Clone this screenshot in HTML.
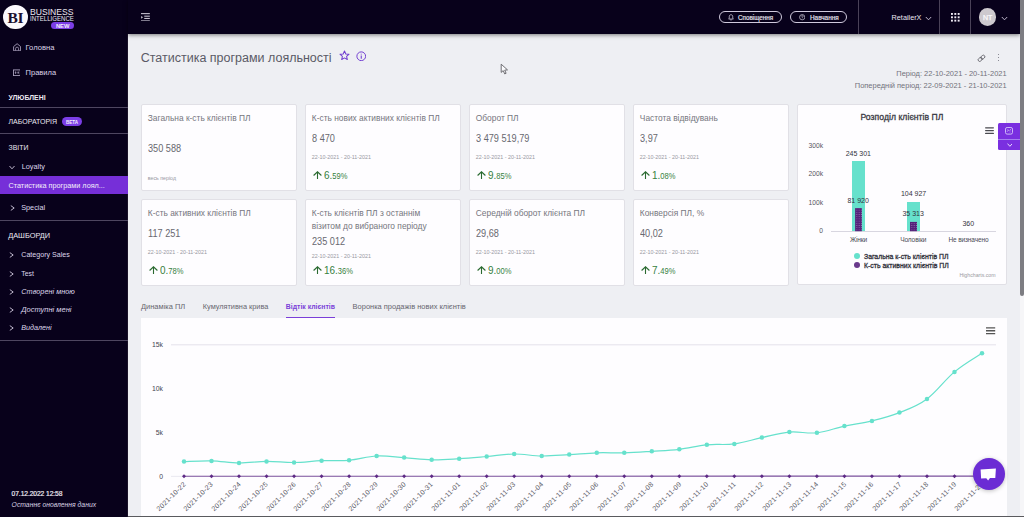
<!DOCTYPE html>
<html><head><meta charset="utf-8"><title>BI</title>
<style>
html,body{margin:0;padding:0;width:1024px;height:517px;overflow:hidden;background:#eeeff3;}
body{position:relative;font-family:"Liberation Sans",sans-serif;}
.t{position:absolute;white-space:nowrap;line-height:1;}
</style></head><body>
<div style="position:absolute;left:0px;top:0px;width:1024px;height:517px;background:#eeeff3"></div>
<div style="position:absolute;left:0px;top:0px;width:128px;height:517px;background:#08011b"></div>
<div style="position:absolute;left:127px;top:34px;width:1px;height:483px;background:#1a1228"></div>
<div style="position:absolute;left:1019.5px;top:0px;width:4.5px;height:517px;background:#f6f6f8"></div>
<div style="position:absolute;left:128px;top:0px;width:892px;height:34px;background:#08011b;box-shadow:0 1px 4px rgba(0,0,0,.5)"></div>
<div style="position:absolute;left:3px;top:4.8px;width:24.5px;height:24.5px;border-radius:50%;background:#fbf9fd"></div>
<div class="t" style="left:15.30px;transform:translateX(-50%);top:9.70px;font-size:15.5px;color:#1a0f30;font-weight:700;font-style:normal;font-family:'Liberation Serif',serif;letter-spacing:-0.5px">BI</div>
<div class="t" style="left:30.00px;top:6.90px;font-size:9.4px;color:#ece8f2;font-weight:400;font-style:normal;transform:scaleX(0.915);transform-origin:0 0">BUSINESS</div>
<div class="t" style="left:30.20px;top:15.40px;font-size:7.2px;color:#ece8f2;font-weight:400;font-style:normal;transform:scaleX(0.845);transform-origin:0 0">INTELLIGENCE</div>
<div style="position:absolute;left:51.2px;top:22.3px;width:23px;height:6.6px;border-radius:4px;background:#7b3ee6"></div>
<div class="t" style="left:62.70px;transform:translateX(-50%);top:23.70px;font-size:5.8px;color:#f4f0fb;font-weight:700;font-style:normal;">NEW</div>
<svg style="position:absolute;left:12.5px;top:42.7px" width="8.2" height="8.4" viewBox="0 0 8.2 8.4"><path d="M0.6 3.6 L4.1 0.7 L7.6 3.6 V7.8 H0.6 Z" fill="none" stroke="#a9a0bc" stroke-width="0.9" stroke-linejoin="round"/><path d="M2.6 7.6 V5.6 A1.5 1.5 0 0 1 5.6 5.6 V7.6" fill="none" stroke="#a9a0bc" stroke-width="0.8"/></svg>
<div class="t" style="left:25.50px;top:44.10px;font-size:7.6px;color:#ddd6ea;font-weight:400;font-style:normal;">Головна</div>
<svg style="position:absolute;left:12.5px;top:69px" width="7.8" height="7" viewBox="0 0 7.8 7"><rect x="0.5" y="0.9" width="6.8" height="5.7" fill="none" stroke="#a9a0bc" stroke-width="0.9"/><path d="M2.6 2.3 V5 M5.2 2.3 V5 M1.8 3.6 H3.4 M4.4 3.6 H6" stroke="#a9a0bc" stroke-width="0.7"/></svg>
<div class="t" style="left:25.60px;top:69.20px;font-size:7.5px;color:#ddd6ea;font-weight:400;font-style:normal;">Правила</div>
<div class="t" style="left:8.50px;top:95.40px;font-size:6.9px;color:#ece8f2;font-weight:700;font-style:normal;">УЛЮБЛЕНІ</div>
<div style="position:absolute;left:0px;top:106.8px;width:128px;height:1.7px;background:#4e4660"></div>
<div class="t" style="left:8.50px;top:118.30px;font-size:7.0px;color:#ece8f2;font-weight:400;font-style:normal;">ЛАБОРАТОРІЯ</div>
<div style="position:absolute;left:62px;top:117px;width:20px;height:9px;border-radius:5px;background:#7b3ee6"></div>
<div class="t" style="left:72.00px;transform:translateX(-50%);top:120.60px;font-size:4.6px;color:#f4f0fb;font-weight:700;font-style:normal;">BETA</div>
<div style="position:absolute;left:0px;top:132.6px;width:128px;height:1.7px;background:#4e4660"></div>
<div class="t" style="left:8.50px;top:144.60px;font-size:6.9px;color:#ece8f2;font-weight:400;font-style:normal;">ЗВІТИ</div>
<svg style="position:absolute;left:9px;top:165px" width="6" height="5" viewBox="0 0 6 5"><path d="M0.5 1 L3 3.8 L5.5 1" fill="none" stroke="#cfc8dc" stroke-width="0.9"/></svg>
<div class="t" style="left:21.70px;top:163.00px;font-size:7.3px;color:#ddd6ea;font-weight:400;font-style:normal;">Loyalty</div>
<div style="position:absolute;left:0px;top:176px;width:128px;height:18px;background:#762fd8"></div>
<div class="t" style="left:8.50px;top:182.30px;font-size:7.26px;color:#f2eefa;font-weight:400;font-style:normal;">Статистика програми лоял...</div>
<svg style="position:absolute;left:9.5px;top:204.5px" width="5" height="6" viewBox="0 0 5 6"><path d="M0.8 0.6 L4.2 3 L0.8 5.4" fill="none" stroke="#cfc8dc" stroke-width="0.9"/></svg>
<div class="t" style="left:21.20px;top:203.50px;font-size:7.3px;color:#ddd6ea;font-weight:400;font-style:normal;">Special</div>
<div style="position:absolute;left:0px;top:219.6px;width:128px;height:1.7px;background:#4e4660"></div>
<div class="t" style="left:8.20px;top:231.60px;font-size:7.4px;color:#ece8f2;font-weight:400;font-style:normal;">ДАШБОРДИ</div>
<svg style="position:absolute;left:9.3px;top:251.7px" width="5" height="6" viewBox="0 0 5 6"><path d="M0.8 0.6 L4.2 3 L0.8 5.4" fill="none" stroke="#cfc8dc" stroke-width="0.9"/></svg>
<div class="t" style="left:21.30px;top:252.20px;font-size:7.1px;color:#ddd6ea;font-weight:400;font-style:normal;">Category Sales</div>
<svg style="position:absolute;left:9.3px;top:270.5px" width="5" height="6" viewBox="0 0 5 6"><path d="M0.8 0.6 L4.2 3 L0.8 5.4" fill="none" stroke="#cfc8dc" stroke-width="0.9"/></svg>
<div class="t" style="left:21.30px;top:271.00px;font-size:6.9px;color:#ddd6ea;font-weight:400;font-style:normal;">Test</div>
<svg style="position:absolute;left:9.3px;top:288.5px" width="5" height="6" viewBox="0 0 5 6"><path d="M0.8 0.6 L4.2 3 L0.8 5.4" fill="none" stroke="#cfc8dc" stroke-width="0.9"/></svg>
<div class="t" style="left:21.30px;top:288.00px;font-size:7.3px;color:#ddd6ea;font-weight:400;font-style:italic;">Створені мною</div>
<svg style="position:absolute;left:9.3px;top:306.5px" width="5" height="6" viewBox="0 0 5 6"><path d="M0.8 0.6 L4.2 3 L0.8 5.4" fill="none" stroke="#cfc8dc" stroke-width="0.9"/></svg>
<div class="t" style="left:21.30px;top:306.00px;font-size:7.5px;color:#ddd6ea;font-weight:400;font-style:italic;">Доступні мені</div>
<svg style="position:absolute;left:9.3px;top:324.8px" width="5" height="6" viewBox="0 0 5 6"><path d="M0.8 0.6 L4.2 3 L0.8 5.4" fill="none" stroke="#cfc8dc" stroke-width="0.9"/></svg>
<div class="t" style="left:21.30px;top:324.30px;font-size:7.2px;color:#ddd6ea;font-weight:400;font-style:italic;">Видалені</div>
<div style="position:absolute;left:0px;top:339.6px;width:128px;height:1.7px;background:#4e4660"></div>
<div class="t" style="left:11.60px;top:491.00px;font-size:6.7px;color:#ece8f2;font-weight:400;font-style:normal;-webkit-text-stroke:0.2px #ece8f2;letter-spacing:-0.08px">07.12.2022 12:58</div>
<div class="t" style="left:11.60px;top:502.00px;font-size:6.8px;color:#d8d2e4;font-weight:400;font-style:italic;">Останнє оновлення даних</div>
<svg style="position:absolute;left:141px;top:12.7px" width="9.3" height="8.6" viewBox="0 0 10 9"><path d="M0 0.6 H9.5 M3.5 3.3 H9.5 M3.5 5.7 H9.5 M0 8.4 H9.5" stroke="#e8e4f0" stroke-width="1"/><path d="M0.3 3 L2 4.5 L0.3 6 Z" fill="#e8e4f0"/></svg>
<div style="position:absolute;left:719px;top:11.2px;width:60.8px;height:9.8px;border:1px solid #cfc9dc;border-radius:7px"></div>
<svg style="position:absolute;left:727.6px;top:14.3px" width="6" height="6.6" viewBox="0 0 8 9"><path d="M4 1 C2.4 1 1.6 2.2 1.6 3.7 V5.7 L0.8 6.9 H7.2 L6.4 5.7 V3.7 C6.4 2.2 5.6 1 4 1 Z" fill="none" stroke="#e8e4f0" stroke-width="0.95" stroke-linejoin="round"/><path d="M3 8.1 H5" stroke="#e8e4f0" stroke-width="0.9"/></svg>
<div class="t" style="left:738.00px;top:15.00px;font-size:6.3px;color:#ece8f2;font-weight:400;font-style:normal;-webkit-text-stroke:0.15px #ece8f2">Сповіщення</div>
<div style="position:absolute;left:790px;top:11.2px;width:54.8px;height:9.8px;border:1px solid #cfc9dc;border-radius:7px"></div>
<svg style="position:absolute;left:798.8px;top:14.3px" width="6.4" height="6.4" viewBox="0 0 8 8"><circle cx="4" cy="4" r="3.3" fill="none" stroke="#e8e4f0" stroke-width="0.8"/><path d="M2.9 3.1 A1.1 1.1 0 1 1 4 4.2 V4.9 M4 5.8 V6.2" fill="none" stroke="#e8e4f0" stroke-width="0.7"/></svg>
<div class="t" style="left:810.00px;top:15.00px;font-size:6.4px;color:#ece8f2;font-weight:400;font-style:normal;-webkit-text-stroke:0.15px #ece8f2">Навчання</div>
<div style="position:absolute;left:857.8px;top:0px;width:1px;height:34px;background:#4a4258"></div>
<div style="position:absolute;left:939.1px;top:0px;width:1px;height:34px;background:#4a4258"></div>
<div style="position:absolute;left:969.9px;top:0px;width:1px;height:34px;background:#4a4258"></div>
<div class="t" style="left:891.60px;top:13.60px;font-size:7.25px;color:#ece8f2;font-weight:400;font-style:normal;">RetailerX</div>
<svg style="position:absolute;left:925px;top:15.5px" width="7" height="5" viewBox="0 0 7 5"><path d="M0.8 1 L3.5 3.8 L6.2 1" fill="none" stroke="#cfc8dc" stroke-width="0.9"/></svg>
<svg style="position:absolute;left:951px;top:12.5px" width="10" height="10" viewBox="0 0 10 10"><rect x="0.00" y="0.00" width="1.9" height="1.9" fill="#f0ecf6"/><rect x="3.35" y="0.00" width="1.9" height="1.9" fill="#f0ecf6"/><rect x="6.70" y="0.00" width="1.9" height="1.9" fill="#f0ecf6"/><rect x="0.00" y="3.35" width="1.9" height="1.9" fill="#f0ecf6"/><rect x="3.35" y="3.35" width="1.9" height="1.9" fill="#f0ecf6"/><rect x="6.70" y="3.35" width="1.9" height="1.9" fill="#f0ecf6"/><rect x="0.00" y="6.70" width="1.9" height="1.9" fill="#f0ecf6"/><rect x="3.35" y="6.70" width="1.9" height="1.9" fill="#f0ecf6"/><rect x="6.70" y="6.70" width="1.9" height="1.9" fill="#f0ecf6"/></svg>
<div style="position:absolute;left:979px;top:8.2px;width:17.4px;height:17.4px;border-radius:50%;background:#cdc9ce"></div>
<div class="t" style="left:987.70px;transform:translateX(-50%);top:13.70px;font-size:7px;color:#fbfafc;font-weight:400;font-style:normal;-webkit-text-stroke:0.25px #fbfafc">NT</div>
<svg style="position:absolute;left:1000.5px;top:15.5px" width="7" height="5" viewBox="0 0 7 5"><path d="M0.8 1 L3.5 3.8 L6.2 1" fill="none" stroke="#cfc8dc" stroke-width="0.9"/></svg>
<div style="position:absolute;left:1020px;top:0px;width:4px;height:296px;background:#7d7d82;border-radius:0 0 2px 2px"></div>
<div class="t" style="left:140.70px;top:52.10px;font-size:12.5px;color:#5a5a66;font-weight:400;font-style:normal;">Статистика програми лояльності</div>
<svg style="position:absolute;left:339.3px;top:50.4px" width="11" height="10.5" viewBox="0 0 24 23"><path d="M12 2 L14.9 8.6 L22 9.3 L16.6 14 L18.2 21 L12 17.3 L5.8 21 L7.4 14 L2 9.3 L9.1 8.6 Z" fill="none" stroke="#6f3ad0" stroke-width="2.2" stroke-linejoin="round"/></svg>
<svg style="position:absolute;left:355.6px;top:50.5px" width="10.5" height="10.5" viewBox="0 0 24 24"><circle cx="12" cy="12" r="10" fill="none" stroke="#6f3ad0" stroke-width="2.2"/><path d="M12 10.5 V17.5 M12 6.5 V8.2" stroke="#6f3ad0" stroke-width="2.4"/></svg>
<svg style="position:absolute;left:976.5px;top:53.5px" width="9" height="8.6" viewBox="0 0 10 10"><g transform="rotate(-40 5 5)" fill="none" stroke="#606068" stroke-width="1.0"><rect x="0.4" y="3.2" width="5.2" height="3.6" rx="1.8"/><rect x="4.4" y="3.2" width="5.2" height="3.6" rx="1.8"/></g></svg>
<div style="position:absolute;left:997.9px;top:53.9px;width:1.2px;height:1.2px;border-radius:50%;background:#6a6a75"></div>
<div style="position:absolute;left:997.9px;top:56.8px;width:1.2px;height:1.2px;border-radius:50%;background:#6a6a75"></div>
<div style="position:absolute;left:997.9px;top:59.7px;width:1.2px;height:1.2px;border-radius:50%;background:#6a6a75"></div>
<div class="t" style="right:17.40px;top:70.40px;font-size:7.48px;color:#72727c;font-weight:400;font-style:normal;">Період: 22-10-2021 - 20-11-2021</div>
<div class="t" style="right:17.40px;top:81.80px;font-size:7.48px;color:#72727c;font-weight:400;font-style:normal;">Попередній період: 22-09-2021 - 21-10-2021</div>
<svg style="position:absolute;left:0;top:0" width="1024" height="517"><path d="M501.2,64.2 L501.2,72.4 L503.2,70.6 L504.7,73.9 L506.1,73.3 L504.7,70.1 L507.5,69.9 Z" fill="#fbfbfd" stroke="#606064" stroke-width="0.9" stroke-linejoin="round"/></svg>
<div style="position:absolute;left:141px;top:104px;width:156px;height:86.5px;background:#fefdff;border:1px solid #e1e0e6;border-radius:2px;box-sizing:border-box"></div>
<div class="t" style="left:147.80px;top:114.10px;font-size:8.4px;color:#76767e;font-weight:400;font-style:normal;">Загальна к-сть клієнтів ПЛ</div>
<div class="t" style="left:147.80px;top:144.00px;font-size:10.0px;color:#68686f;font-weight:400;font-style:normal;transform:scaleX(0.915);transform-origin:0 0">350 588</div>
<div class="t" style="left:147.80px;top:175.80px;font-size:5.25px;color:#98989f;font-weight:400;font-style:normal;">весь період</div>
<div style="position:absolute;left:305px;top:104px;width:156px;height:86.5px;background:#fefdff;border:1px solid #e1e0e6;border-radius:2px;box-sizing:border-box"></div>
<div class="t" style="left:311.80px;top:114.10px;font-size:8.4px;color:#76767e;font-weight:400;font-style:normal;">К-сть нових активних клієнтів ПЛ</div>
<div class="t" style="left:311.80px;top:134.00px;font-size:10.0px;color:#68686f;font-weight:400;font-style:normal;transform:scaleX(0.915);transform-origin:0 0">8 470</div>
<div class="t" style="left:311.80px;top:155.00px;font-size:5.37px;color:#98989f;font-weight:400;font-style:normal;">22-10-2021 - 20-11-2021</div>
<svg style="position:absolute;left:312.7px;top:170.8px" width="9" height="8.5" viewBox="0 0 18 17"><path d="M9 16.5 V1.8 M1.2 9 L9 1.5 L16.8 9" fill="none" stroke="#2a6a30" stroke-width="2.2"/></svg>
<div class="t" style="left:323.90000000000003px;top:170.00px;font-size:11.2px;color:#367f40;transform:scaleX(0.89);transform-origin:0 0">6.<span style="font-size:8.5px">59%</span></div>
<div style="position:absolute;left:469px;top:104px;width:156px;height:86.5px;background:#fefdff;border:1px solid #e1e0e6;border-radius:2px;box-sizing:border-box"></div>
<div class="t" style="left:475.80px;top:114.10px;font-size:8.4px;color:#76767e;font-weight:400;font-style:normal;">Оборот ПЛ</div>
<div class="t" style="left:475.80px;top:134.00px;font-size:10.0px;color:#68686f;font-weight:400;font-style:normal;transform:scaleX(0.915);transform-origin:0 0">3 479 519,79</div>
<div class="t" style="left:475.80px;top:155.00px;font-size:5.37px;color:#98989f;font-weight:400;font-style:normal;">22-10-2021 - 20-11-2021</div>
<svg style="position:absolute;left:476.7px;top:170.8px" width="9" height="8.5" viewBox="0 0 18 17"><path d="M9 16.5 V1.8 M1.2 9 L9 1.5 L16.8 9" fill="none" stroke="#2a6a30" stroke-width="2.2"/></svg>
<div class="t" style="left:487.90000000000003px;top:170.00px;font-size:11.2px;color:#367f40;transform:scaleX(0.89);transform-origin:0 0">9.<span style="font-size:8.5px">85%</span></div>
<div style="position:absolute;left:633px;top:104px;width:156px;height:86.5px;background:#fefdff;border:1px solid #e1e0e6;border-radius:2px;box-sizing:border-box"></div>
<div class="t" style="left:639.80px;top:114.10px;font-size:8.4px;color:#76767e;font-weight:400;font-style:normal;">Частота відвідувань</div>
<div class="t" style="left:639.80px;top:134.00px;font-size:10.0px;color:#68686f;font-weight:400;font-style:normal;transform:scaleX(0.915);transform-origin:0 0">3,97</div>
<div class="t" style="left:639.80px;top:155.00px;font-size:5.37px;color:#98989f;font-weight:400;font-style:normal;">22-10-2021 - 20-11-2021</div>
<svg style="position:absolute;left:640.6999999999999px;top:170.8px" width="9" height="8.5" viewBox="0 0 18 17"><path d="M9 16.5 V1.8 M1.2 9 L9 1.5 L16.8 9" fill="none" stroke="#2a6a30" stroke-width="2.2"/></svg>
<div class="t" style="left:651.9px;top:170.00px;font-size:11.2px;color:#367f40;transform:scaleX(0.89);transform-origin:0 0">1.<span style="font-size:8.5px">08%</span></div>
<div style="position:absolute;left:141px;top:199px;width:156px;height:86.5px;background:#fefdff;border:1px solid #e1e0e6;border-radius:2px;box-sizing:border-box"></div>
<div class="t" style="left:147.80px;top:209.10px;font-size:8.4px;color:#76767e;font-weight:400;font-style:normal;">К-сть активних клієнтів ПЛ</div>
<div class="t" style="left:147.80px;top:228.80px;font-size:10.0px;color:#68686f;font-weight:400;font-style:normal;transform:scaleX(0.915);transform-origin:0 0">117 251</div>
<div class="t" style="left:147.80px;top:249.80px;font-size:5.37px;color:#98989f;font-weight:400;font-style:normal;">22-10-2021 - 20-11-2021</div>
<svg style="position:absolute;left:148.70000000000002px;top:265.8px" width="9" height="8.5" viewBox="0 0 18 17"><path d="M9 16.5 V1.8 M1.2 9 L9 1.5 L16.8 9" fill="none" stroke="#2a6a30" stroke-width="2.2"/></svg>
<div class="t" style="left:159.9px;top:265.00px;font-size:11.2px;color:#367f40;transform:scaleX(0.89);transform-origin:0 0">0.<span style="font-size:8.5px">78%</span></div>
<div style="position:absolute;left:305px;top:199px;width:156px;height:86.5px;background:#fefdff;border:1px solid #e1e0e6;border-radius:2px;box-sizing:border-box"></div>
<div class="t" style="left:311.80px;top:209.10px;font-size:8.4px;color:#76767e;font-weight:400;font-style:normal;">К-сть клієнтів ПЛ з останнім</div>
<div class="t" style="left:311.80px;top:222.00px;font-size:8.4px;color:#76767e;font-weight:400;font-style:normal;">візитом до вибраного періоду</div>
<div class="t" style="left:311.80px;top:236.60px;font-size:10.0px;color:#68686f;font-weight:400;font-style:normal;transform:scaleX(0.915);transform-origin:0 0">235 012</div>
<div class="t" style="left:311.80px;top:253.50px;font-size:5.37px;color:#98989f;font-weight:400;font-style:normal;">22-10-2021 - 20-11-2021</div>
<svg style="position:absolute;left:312.7px;top:265.8px" width="9" height="8.5" viewBox="0 0 18 17"><path d="M9 16.5 V1.8 M1.2 9 L9 1.5 L16.8 9" fill="none" stroke="#2a6a30" stroke-width="2.2"/></svg>
<div class="t" style="left:323.90000000000003px;top:265.00px;font-size:11.2px;color:#367f40;transform:scaleX(0.89);transform-origin:0 0">16.<span style="font-size:8.5px">36%</span></div>
<div style="position:absolute;left:469px;top:199px;width:156px;height:86.5px;background:#fefdff;border:1px solid #e1e0e6;border-radius:2px;box-sizing:border-box"></div>
<div class="t" style="left:475.80px;top:209.10px;font-size:8.4px;color:#76767e;font-weight:400;font-style:normal;">Середній оборот клієнта ПЛ</div>
<div class="t" style="left:475.80px;top:228.80px;font-size:10.0px;color:#68686f;font-weight:400;font-style:normal;transform:scaleX(0.915);transform-origin:0 0">29,68</div>
<div class="t" style="left:475.80px;top:249.80px;font-size:5.37px;color:#98989f;font-weight:400;font-style:normal;">22-10-2021 - 20-11-2021</div>
<svg style="position:absolute;left:476.7px;top:265.8px" width="9" height="8.5" viewBox="0 0 18 17"><path d="M9 16.5 V1.8 M1.2 9 L9 1.5 L16.8 9" fill="none" stroke="#2a6a30" stroke-width="2.2"/></svg>
<div class="t" style="left:487.90000000000003px;top:265.00px;font-size:11.2px;color:#367f40;transform:scaleX(0.89);transform-origin:0 0">9.<span style="font-size:8.5px">00%</span></div>
<div style="position:absolute;left:633px;top:199px;width:156px;height:86.5px;background:#fefdff;border:1px solid #e1e0e6;border-radius:2px;box-sizing:border-box"></div>
<div class="t" style="left:639.80px;top:209.10px;font-size:8.4px;color:#76767e;font-weight:400;font-style:normal;">Конверсія ПЛ, %</div>
<div class="t" style="left:639.80px;top:228.80px;font-size:10.0px;color:#68686f;font-weight:400;font-style:normal;transform:scaleX(0.915);transform-origin:0 0">40,02</div>
<div class="t" style="left:639.80px;top:249.80px;font-size:5.37px;color:#98989f;font-weight:400;font-style:normal;">22-10-2021 - 20-11-2021</div>
<svg style="position:absolute;left:640.6999999999999px;top:265.8px" width="9" height="8.5" viewBox="0 0 18 17"><path d="M9 16.5 V1.8 M1.2 9 L9 1.5 L16.8 9" fill="none" stroke="#2a6a30" stroke-width="2.2"/></svg>
<div class="t" style="left:651.9px;top:265.00px;font-size:11.2px;color:#367f40;transform:scaleX(0.89);transform-origin:0 0">7.<span style="font-size:8.5px">49%</span></div>
<div style="position:absolute;left:797px;top:104px;width:210px;height:180.5px;background:#fefdff;border:1px solid #e1e0e6;border-radius:2px;box-sizing:border-box"></div>
<div class="t" style="left:902.00px;transform:translateX(-50%);top:112.80px;font-size:8.6px;color:#3a3a44;font-weight:400;font-style:normal;-webkit-text-stroke:0.3px #3a3a44;letter-spacing:0.05px">Розподіл клієнтів ПЛ</div>
<svg style="position:absolute;left:985.3px;top:127px" width="9" height="7.2" viewBox="0 0 9 7.2"><path d="M0.6 0.8 H8.4 M0.6 3.6 H8.4 M0.6 6.4 H8.4" stroke="#4a4a50" stroke-width="1.2" stroke-linecap="round"/></svg>
<div class="t" style="right:201.00px;top:142.80px;font-size:6.7px;color:#555560;font-weight:400;font-style:normal;">300k</div>
<div class="t" style="right:201.00px;top:171.30px;font-size:6.7px;color:#555560;font-weight:400;font-style:normal;">200k</div>
<div class="t" style="right:201.00px;top:200.00px;font-size:6.7px;color:#555560;font-weight:400;font-style:normal;">100k</div>
<div class="t" style="right:201.00px;top:228.20px;font-size:6.7px;color:#555560;font-weight:400;font-style:normal;">0</div>
<div style="position:absolute;left:831px;top:231px;width:165px;height:0.8px;background:#d8d6e0"></div>
<div style="position:absolute;left:852px;top:161.3px;width:13.2px;height:69.9px;background:#66e1cc"></div>
<div style="position:absolute;left:906.8px;top:201.9px;width:13.1px;height:29.3px;background:#66e1cc"></div>
<svg style="position:absolute;left:0;top:0" width="1024" height="517"><defs><pattern id="dots" width="2.2" height="2.2" patternUnits="userSpaceOnUse"><rect width="2.2" height="2.2" fill="#54227a"/><circle cx="1.1" cy="1.1" r="0.45" fill="#b9a0cf"/></pattern></defs><rect x="855.1" y="208.1" width="6.8" height="23.1" fill="url(#dots)"/><rect x="910" y="221.9" width="7" height="9.3" fill="url(#dots)"/></svg>
<div class="t" style="left:858.30px;transform:translateX(-50%);top:150.00px;font-size:7.0px;color:#333340;font-weight:400;font-style:normal;">245 301</div>
<div class="t" style="left:913.60px;transform:translateX(-50%);top:190.40px;font-size:7.0px;color:#333340;font-weight:400;font-style:normal;">104 927</div>
<div class="t" style="left:858.20px;transform:translateX(-50%);top:197.00px;font-size:7.0px;color:#333340;font-weight:400;font-style:normal;">81 920</div>
<div class="t" style="left:913.20px;transform:translateX(-50%);top:210.00px;font-size:7.0px;color:#333340;font-weight:400;font-style:normal;">35 313</div>
<div class="t" style="left:968.30px;transform:translateX(-50%);top:219.70px;font-size:7.0px;color:#333340;font-weight:400;font-style:normal;">360</div>
<div class="t" style="left:858.50px;transform:translateX(-50%);top:237.00px;font-size:6.6px;color:#4a4a54;font-weight:400;font-style:normal;letter-spacing:-0.12px">Жінки</div>
<div class="t" style="left:913.20px;transform:translateX(-50%);top:237.00px;font-size:6.6px;color:#4a4a54;font-weight:400;font-style:normal;letter-spacing:-0.12px">Чоловіки</div>
<div class="t" style="left:968.40px;transform:translateX(-50%);top:237.00px;font-size:6.5px;color:#4a4a54;font-weight:400;font-style:normal;letter-spacing:-0.12px">Не визначено</div>
<div style="position:absolute;left:854px;top:253.3px;width:6.2px;height:6.2px;border-radius:50%;background:#66e1cc"></div>
<div class="t" style="left:864.00px;top:254.30px;font-size:6.9px;color:#33333d;font-weight:400;font-style:normal;-webkit-text-stroke:0.3px #33333d">Загальна к-сть клієнтів ПЛ</div>
<div style="position:absolute;left:854px;top:261.8px;width:6.2px;height:6.2px;border-radius:50%;background:#6a3a8c"></div>
<div class="t" style="left:864.00px;top:262.80px;font-size:6.9px;color:#33333d;font-weight:400;font-style:normal;-webkit-text-stroke:0.3px #33333d">К-сть активних клієнтів ПЛ</div>
<div class="t" style="right:28.40px;top:272.80px;font-size:5.21px;color:#9a9aa2;font-weight:400;font-style:normal;">Highcharts.com</div>
<div style="position:absolute;left:998px;top:122.6px;width:22px;height:27.2px;background:#7a2fe0;border-radius:1.5px 0 0 1.5px"></div>
<div style="position:absolute;left:998px;top:138.8px;width:22px;height:1.6px;background:#a57ff0"></div>
<svg style="position:absolute;left:1005px;top:127.3px" width="8" height="7.6" viewBox="0 0 8 7.6"><rect x="0.5" y="0.5" width="7" height="6.6" rx="1.6" fill="none" stroke="#d8c8fb" stroke-width="0.9"/><path d="M2.2 4.6 L3.6 3 M4.6 3.6 L5.9 2.4 M2.6 2.6 H3.2 M4.8 5 H5.4" stroke="#e6dbff" stroke-width="0.8"/></svg>
<svg style="position:absolute;left:1006.6px;top:143.2px" width="5.8" height="4" viewBox="0 0 5.8 4"><path d="M0.5 0.6 L2.9 3.3 L5.3 0.6" fill="none" stroke="#efe8ff" stroke-width="0.9"/></svg>
<div class="t" style="left:141.00px;top:303.10px;font-size:7.48px;color:#66666f;font-weight:400;font-style:normal;">Динаміка ПЛ</div>
<div class="t" style="left:202.80px;top:303.10px;font-size:7.34px;color:#66666f;font-weight:400;font-style:normal;">Кумулятивна крива</div>
<div class="t" style="left:285.80px;top:304.10px;font-size:6.89px;color:#7a3fd8;font-weight:700;font-style:normal;">Відтік клієнтів</div>
<div class="t" style="left:352.60px;top:303.10px;font-size:7.47px;color:#66666f;font-weight:400;font-style:normal;">Воронка продажів нових клієнтів</div>
<div style="position:absolute;left:285.8px;top:316.8px;width:49.2px;height:1.5px;background:#7a3fd8"></div>
<div style="position:absolute;left:141px;top:318px;width:866px;height:199px;background:#fefdff"></div>
<svg style="position:absolute;left:986px;top:327px" width="9.5" height="7.5" viewBox="0 0 9.5 7.5"><path d="M0 0.8 H9.2 M0 3.75 H9.2 M0 6.7 H9.2" stroke="#555" stroke-width="1.3"/></svg>
<svg style="position:absolute;left:0;top:0" width="1024" height="517" viewBox="0 0 1024 517"><line x1="171" y1="344.8" x2="996" y2="344.8" stroke="#e4e2ec" stroke-width="1"/><line x1="171" y1="476.4" x2="996" y2="476.4" stroke="#e4e2ec" stroke-width="0.8"/><path d="M184.00,461.60 C188.95,461.47 201.61,460.65 211.52,460.90 C221.42,461.15 229.13,462.91 239.03,463.00 C248.94,463.09 256.65,461.49 266.55,461.40 C276.46,461.31 284.16,462.63 294.07,462.50 C303.98,462.37 311.68,461.10 321.59,460.70 C331.49,460.30 339.20,461.15 349.10,460.30 C359.01,459.45 366.71,456.49 376.62,456.00 C386.53,455.51 394.23,456.92 404.14,457.60 C414.04,458.28 421.75,459.60 431.66,459.80 C441.56,460.00 449.27,459.29 459.17,458.70 C469.08,458.11 476.78,457.35 486.69,456.50 C496.60,455.65 504.30,454.09 514.21,454.00 C524.11,453.91 531.82,455.89 541.72,456.00 C551.63,456.11 559.34,455.18 569.24,454.60 C579.15,454.02 586.85,453.12 596.76,452.80 C606.66,452.48 614.37,453.07 624.28,452.80 C634.18,452.53 641.89,451.93 651.79,451.30 C661.70,450.67 669.40,450.47 679.31,449.30 C689.22,448.13 696.92,445.77 706.83,444.80 C716.73,443.83 724.44,445.20 734.34,443.90 C744.25,442.60 751.96,439.72 761.86,437.60 C771.77,435.48 779.47,432.96 789.38,432.10 C799.29,431.24 806.99,433.88 816.90,432.80 C826.80,431.72 834.51,428.24 844.41,426.10 C854.32,423.96 862.02,423.33 871.93,420.90 C881.84,418.47 889.54,416.54 899.45,412.60 C909.35,408.66 917.06,406.33 926.97,399.00 C936.87,391.67 944.58,380.14 954.48,371.90 C964.39,363.66 977.05,356.57 982.00,353.20" fill="none" stroke="#66e1cc" stroke-width="1.2"/><circle cx="184.00" cy="461.60" r="2.25" fill="#66e1cc"/><circle cx="211.52" cy="460.90" r="2.25" fill="#66e1cc"/><circle cx="239.03" cy="463.00" r="2.25" fill="#66e1cc"/><circle cx="266.55" cy="461.40" r="2.25" fill="#66e1cc"/><circle cx="294.07" cy="462.50" r="2.25" fill="#66e1cc"/><circle cx="321.59" cy="460.70" r="2.25" fill="#66e1cc"/><circle cx="349.10" cy="460.30" r="2.25" fill="#66e1cc"/><circle cx="376.62" cy="456.00" r="2.25" fill="#66e1cc"/><circle cx="404.14" cy="457.60" r="2.25" fill="#66e1cc"/><circle cx="431.66" cy="459.80" r="2.25" fill="#66e1cc"/><circle cx="459.17" cy="458.70" r="2.25" fill="#66e1cc"/><circle cx="486.69" cy="456.50" r="2.25" fill="#66e1cc"/><circle cx="514.21" cy="454.00" r="2.25" fill="#66e1cc"/><circle cx="541.72" cy="456.00" r="2.25" fill="#66e1cc"/><circle cx="569.24" cy="454.60" r="2.25" fill="#66e1cc"/><circle cx="596.76" cy="452.80" r="2.25" fill="#66e1cc"/><circle cx="624.28" cy="452.80" r="2.25" fill="#66e1cc"/><circle cx="651.79" cy="451.30" r="2.25" fill="#66e1cc"/><circle cx="679.31" cy="449.30" r="2.25" fill="#66e1cc"/><circle cx="706.83" cy="444.80" r="2.25" fill="#66e1cc"/><circle cx="734.34" cy="443.90" r="2.25" fill="#66e1cc"/><circle cx="761.86" cy="437.60" r="2.25" fill="#66e1cc"/><circle cx="789.38" cy="432.10" r="2.25" fill="#66e1cc"/><circle cx="816.90" cy="432.80" r="2.25" fill="#66e1cc"/><circle cx="844.41" cy="426.10" r="2.25" fill="#66e1cc"/><circle cx="871.93" cy="420.90" r="2.25" fill="#66e1cc"/><circle cx="899.45" cy="412.60" r="2.25" fill="#66e1cc"/><circle cx="926.97" cy="399.00" r="2.25" fill="#66e1cc"/><circle cx="954.48" cy="371.90" r="2.25" fill="#66e1cc"/><circle cx="982.00" cy="353.20" r="2.25" fill="#66e1cc"/><line x1="184.00" y1="476.3" x2="982.00" y2="476.1" stroke="#7f559f" stroke-width="1.1"/><path d="M184.00,474.3 L186.00,476.3 L184.00,478.3 L182.00,476.3 Z" fill="#5e2a86"/><path d="M211.52,474.3 L213.52,476.3 L211.52,478.3 L209.52,476.3 Z" fill="#5e2a86"/><path d="M239.03,474.3 L241.03,476.3 L239.03,478.3 L237.03,476.3 Z" fill="#5e2a86"/><path d="M266.55,474.3 L268.55,476.3 L266.55,478.3 L264.55,476.3 Z" fill="#5e2a86"/><path d="M294.07,474.3 L296.07,476.3 L294.07,478.3 L292.07,476.3 Z" fill="#5e2a86"/><path d="M321.59,474.3 L323.59,476.3 L321.59,478.3 L319.59,476.3 Z" fill="#5e2a86"/><path d="M349.10,474.3 L351.10,476.3 L349.10,478.3 L347.10,476.3 Z" fill="#5e2a86"/><path d="M376.62,474.3 L378.62,476.3 L376.62,478.3 L374.62,476.3 Z" fill="#5e2a86"/><path d="M404.14,474.3 L406.14,476.3 L404.14,478.3 L402.14,476.3 Z" fill="#5e2a86"/><path d="M431.66,474.3 L433.66,476.3 L431.66,478.3 L429.66,476.3 Z" fill="#5e2a86"/><path d="M459.17,474.3 L461.17,476.3 L459.17,478.3 L457.17,476.3 Z" fill="#5e2a86"/><path d="M486.69,474.3 L488.69,476.3 L486.69,478.3 L484.69,476.3 Z" fill="#5e2a86"/><path d="M514.21,474.3 L516.21,476.3 L514.21,478.3 L512.21,476.3 Z" fill="#5e2a86"/><path d="M541.72,474.3 L543.72,476.3 L541.72,478.3 L539.72,476.3 Z" fill="#5e2a86"/><path d="M569.24,474.3 L571.24,476.3 L569.24,478.3 L567.24,476.3 Z" fill="#5e2a86"/><path d="M596.76,474.3 L598.76,476.3 L596.76,478.3 L594.76,476.3 Z" fill="#5e2a86"/><path d="M624.28,474.3 L626.28,476.3 L624.28,478.3 L622.28,476.3 Z" fill="#5e2a86"/><path d="M651.79,474.3 L653.79,476.3 L651.79,478.3 L649.79,476.3 Z" fill="#5e2a86"/><path d="M679.31,474.3 L681.31,476.3 L679.31,478.3 L677.31,476.3 Z" fill="#5e2a86"/><path d="M706.83,474.3 L708.83,476.3 L706.83,478.3 L704.83,476.3 Z" fill="#5e2a86"/><path d="M734.34,474.3 L736.34,476.3 L734.34,478.3 L732.34,476.3 Z" fill="#5e2a86"/><path d="M761.86,474.3 L763.86,476.3 L761.86,478.3 L759.86,476.3 Z" fill="#5e2a86"/><path d="M789.38,474.3 L791.38,476.3 L789.38,478.3 L787.38,476.3 Z" fill="#5e2a86"/><path d="M816.90,474.3 L818.90,476.3 L816.90,478.3 L814.90,476.3 Z" fill="#5e2a86"/><path d="M844.41,474.3 L846.41,476.3 L844.41,478.3 L842.41,476.3 Z" fill="#5e2a86"/><path d="M871.93,474.3 L873.93,476.3 L871.93,478.3 L869.93,476.3 Z" fill="#5e2a86"/><path d="M899.45,474.3 L901.45,476.3 L899.45,478.3 L897.45,476.3 Z" fill="#5e2a86"/><path d="M926.97,474.3 L928.97,476.3 L926.97,478.3 L924.97,476.3 Z" fill="#5e2a86"/><path d="M954.48,474.3 L956.48,476.3 L954.48,478.3 L952.48,476.3 Z" fill="#5e2a86"/><path d="M982.00,474.3 L984.00,476.3 L982.00,478.3 L980.00,476.3 Z" fill="#5e2a86"/></svg>
<div class="t" style="right:861.00px;top:342.30px;font-size:6.8px;color:#444450;font-weight:400;font-style:normal;">15k</div>
<div class="t" style="right:861.00px;top:386.30px;font-size:6.8px;color:#444450;font-weight:400;font-style:normal;">10k</div>
<div class="t" style="right:861.00px;top:430.40px;font-size:6.8px;color:#444450;font-weight:400;font-style:normal;">5k</div>
<div class="t" style="right:861.00px;top:473.60px;font-size:6.8px;color:#444450;font-weight:400;font-style:normal;">0</div>
<div class="t" style="right:839.00px;top:479.63px;font-size:6.9px;color:#555560;transform-origin:100% 50%;transform:rotate(-45deg);letter-spacing:0.3px">2021-10-22</div>
<div class="t" style="right:811.48px;top:479.63px;font-size:6.9px;color:#555560;transform-origin:100% 50%;transform:rotate(-45deg);letter-spacing:0.3px">2021-10-23</div>
<div class="t" style="right:783.97px;top:479.63px;font-size:6.9px;color:#555560;transform-origin:100% 50%;transform:rotate(-45deg);letter-spacing:0.3px">2021-10-24</div>
<div class="t" style="right:756.45px;top:479.63px;font-size:6.9px;color:#555560;transform-origin:100% 50%;transform:rotate(-45deg);letter-spacing:0.3px">2021-10-25</div>
<div class="t" style="right:728.93px;top:479.63px;font-size:6.9px;color:#555560;transform-origin:100% 50%;transform:rotate(-45deg);letter-spacing:0.3px">2021-10-26</div>
<div class="t" style="right:701.41px;top:479.63px;font-size:6.9px;color:#555560;transform-origin:100% 50%;transform:rotate(-45deg);letter-spacing:0.3px">2021-10-27</div>
<div class="t" style="right:673.90px;top:479.63px;font-size:6.9px;color:#555560;transform-origin:100% 50%;transform:rotate(-45deg);letter-spacing:0.3px">2021-10-28</div>
<div class="t" style="right:646.38px;top:479.63px;font-size:6.9px;color:#555560;transform-origin:100% 50%;transform:rotate(-45deg);letter-spacing:0.3px">2021-10-29</div>
<div class="t" style="right:618.86px;top:479.63px;font-size:6.9px;color:#555560;transform-origin:100% 50%;transform:rotate(-45deg);letter-spacing:0.3px">2021-10-30</div>
<div class="t" style="right:591.34px;top:479.63px;font-size:6.9px;color:#555560;transform-origin:100% 50%;transform:rotate(-45deg);letter-spacing:0.3px">2021-10-31</div>
<div class="t" style="right:563.83px;top:479.63px;font-size:6.9px;color:#555560;transform-origin:100% 50%;transform:rotate(-45deg);letter-spacing:0.3px">2021-11-01</div>
<div class="t" style="right:536.31px;top:479.63px;font-size:6.9px;color:#555560;transform-origin:100% 50%;transform:rotate(-45deg);letter-spacing:0.3px">2021-11-02</div>
<div class="t" style="right:508.79px;top:479.63px;font-size:6.9px;color:#555560;transform-origin:100% 50%;transform:rotate(-45deg);letter-spacing:0.3px">2021-11-03</div>
<div class="t" style="right:481.28px;top:479.63px;font-size:6.9px;color:#555560;transform-origin:100% 50%;transform:rotate(-45deg);letter-spacing:0.3px">2021-11-04</div>
<div class="t" style="right:453.76px;top:479.63px;font-size:6.9px;color:#555560;transform-origin:100% 50%;transform:rotate(-45deg);letter-spacing:0.3px">2021-11-05</div>
<div class="t" style="right:426.24px;top:479.63px;font-size:6.9px;color:#555560;transform-origin:100% 50%;transform:rotate(-45deg);letter-spacing:0.3px">2021-11-06</div>
<div class="t" style="right:398.72px;top:479.63px;font-size:6.9px;color:#555560;transform-origin:100% 50%;transform:rotate(-45deg);letter-spacing:0.3px">2021-11-07</div>
<div class="t" style="right:371.21px;top:479.63px;font-size:6.9px;color:#555560;transform-origin:100% 50%;transform:rotate(-45deg);letter-spacing:0.3px">2021-11-08</div>
<div class="t" style="right:343.69px;top:479.63px;font-size:6.9px;color:#555560;transform-origin:100% 50%;transform:rotate(-45deg);letter-spacing:0.3px">2021-11-09</div>
<div class="t" style="right:316.17px;top:479.63px;font-size:6.9px;color:#555560;transform-origin:100% 50%;transform:rotate(-45deg);letter-spacing:0.3px">2021-11-10</div>
<div class="t" style="right:288.66px;top:479.63px;font-size:6.9px;color:#555560;transform-origin:100% 50%;transform:rotate(-45deg);letter-spacing:0.3px">2021-11-11</div>
<div class="t" style="right:261.14px;top:479.63px;font-size:6.9px;color:#555560;transform-origin:100% 50%;transform:rotate(-45deg);letter-spacing:0.3px">2021-11-12</div>
<div class="t" style="right:233.62px;top:479.63px;font-size:6.9px;color:#555560;transform-origin:100% 50%;transform:rotate(-45deg);letter-spacing:0.3px">2021-11-13</div>
<div class="t" style="right:206.10px;top:479.63px;font-size:6.9px;color:#555560;transform-origin:100% 50%;transform:rotate(-45deg);letter-spacing:0.3px">2021-11-14</div>
<div class="t" style="right:178.59px;top:479.63px;font-size:6.9px;color:#555560;transform-origin:100% 50%;transform:rotate(-45deg);letter-spacing:0.3px">2021-11-15</div>
<div class="t" style="right:151.07px;top:479.63px;font-size:6.9px;color:#555560;transform-origin:100% 50%;transform:rotate(-45deg);letter-spacing:0.3px">2021-11-16</div>
<div class="t" style="right:123.55px;top:479.63px;font-size:6.9px;color:#555560;transform-origin:100% 50%;transform:rotate(-45deg);letter-spacing:0.3px">2021-11-17</div>
<div class="t" style="right:96.03px;top:479.63px;font-size:6.9px;color:#555560;transform-origin:100% 50%;transform:rotate(-45deg);letter-spacing:0.3px">2021-11-18</div>
<div class="t" style="right:68.52px;top:479.63px;font-size:6.9px;color:#555560;transform-origin:100% 50%;transform:rotate(-45deg);letter-spacing:0.3px">2021-11-19</div>
<div class="t" style="right:41.00px;top:479.63px;font-size:6.9px;color:#555560;transform-origin:100% 50%;transform:rotate(-45deg);letter-spacing:0.3px">2021-11-20</div>
<div style="position:absolute;left:128px;top:515.6px;width:896px;height:1.4px;background:#5a5a5e"></div>
<div style="position:absolute;left:972.5px;top:457.8px;width:32px;height:32px;border-radius:50%;background:#6b2cd4;box-shadow:0 1px 4px rgba(0,0,0,.25)"></div>
<svg style="position:absolute;left:980px;top:467.5px" width="16.5" height="13.5" viewBox="0 0 16.5 13.5"><path d="M0.6 1.4 L15.9 0.4 L15.3 9.9 L10 10.1 L8.1 12.6 L6.3 10.3 L1.1 10.5 Z" fill="#fff"/></svg>
</body></html>
